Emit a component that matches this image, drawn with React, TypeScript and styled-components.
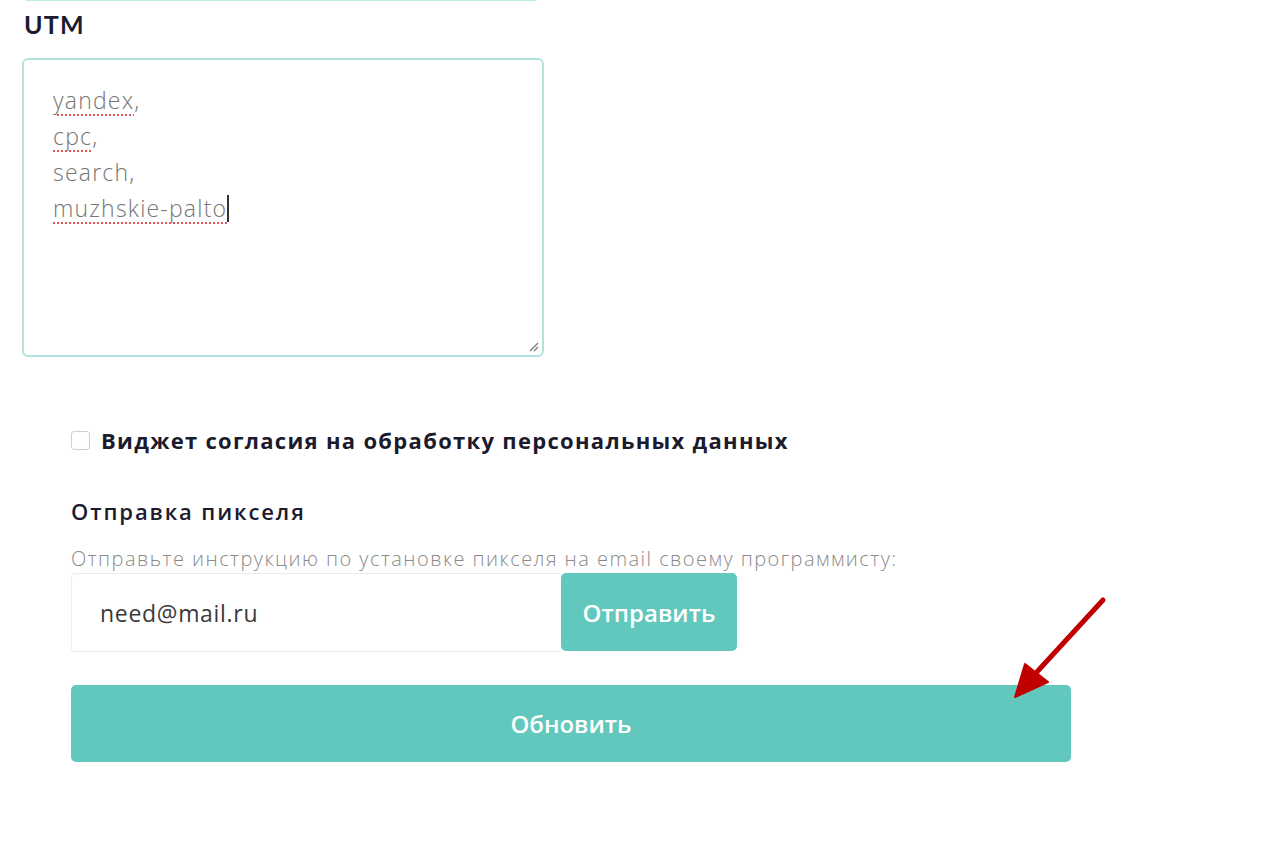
import React from 'react';
import styled, { createGlobalStyle } from 'styled-components';

const GlobalStyle = createGlobalStyle`
  html, body {
    margin: 0;
    padding: 0;
    background: #ffffff;
  }
  body {
    font-family: "Open Sans", "Noto Sans", sans-serif;
    color: #1c1b2e;
  }
`;

const Page = styled.div`
  position: relative;
  width: 1274px;
  height: 848px;
  overflow: hidden;
  background: #fff;
`;

const TopBlock = styled.div`
  padding-left: 22px;
  width: 522px;
`;

const CutInput = styled.div`
  height: 40px;
  margin-top: -39px;
  border: 2px solid #bfe9e5;
  border-radius: 6px;
  box-sizing: border-box;
  width: 518px;
`;

const FieldTitle = styled.div`
  margin: 8px 0 0 2px;
  font-family: "Lato", sans-serif;
  font-weight: 700;
  font-size: 25px;
  letter-spacing: 1.2px;
  line-height: 30px;
  color: #1c1b2e;
`;

const TextArea = styled.div`
  position: relative;
  margin-top: 19px;
  height: 299px;
  box-sizing: border-box;
  border: 2px solid #b3e3df;
  border-radius: 6px;
  padding: 22px 0 0 29px;
  font-family: "Open Sans", sans-serif;
  font-weight: 300;
  font-size: 23px;
  letter-spacing: 1.2px;
  line-height: 36px;
  color: #767676;
`;

const Line = styled.div<{ $typo?: boolean }>`
  height: 36px;
  span {
    text-decoration: ${(p) => (p.$typo ? 'underline dotted #e25555' : 'none')};
    text-decoration-thickness: 2px;
    text-underline-offset: 5px;
  }
`;

const Caret = styled.i`
  display: inline-block;
  width: 1.5px;
  height: 27px;
  background: #333;
  vertical-align: -5px;
`;

const Grip = styled.svg`
  position: absolute;
  right: 3px;
  bottom: 3px;
`;

const Form = styled.div`
  padding: 68px 0 0 71px;
  width: 1000px;
`;

const CheckRow = styled.label`
  display: flex;
  align-items: center;
  gap: 11px;
  font-family: "Open Sans", sans-serif;
  font-weight: 700;
  font-size: 22px;
  letter-spacing: 1.3px;
  line-height: 30px;
  color: #1c1b2e;
`;

const Box = styled.span`
  width: 19px;
  height: 19px;
  box-sizing: border-box;
  border: 1px solid #cfcfcf;
  border-radius: 3px;
  background: #fff;
`;

const SectionTitle = styled.div`
  margin-top: 42px;
  font-family: "Open Sans", sans-serif;
  font-weight: 600;
  font-size: 22px;
  letter-spacing: 1.9px;
  line-height: 28px;
  color: #1c1b2e;
`;

const Hint = styled.div`
  margin-top: 22px;
  font-family: "Open Sans", sans-serif;
  font-weight: 300;
  font-size: 20px;
  letter-spacing: 1.45px;
  line-height: 24px;
  color: #8a8a8a;
  white-space: nowrap;
`;

const SendRow = styled.div`
  display: flex;
  margin-top: 2px;
  height: 79px;
`;

const EmailInput = styled.div`
  width: 490px;
  box-sizing: border-box;
  border: 1px solid #ececec;
  border-right: none;
  border-radius: 4px 0 0 4px;
  display: flex;
  align-items: center;
  padding-left: 28px;
  font-family: "Open Sans", sans-serif;
  font-weight: 400;
  font-size: 23px;
  letter-spacing: 0.7px;
  color: #3a3a3a;
`;

const Button = styled.button<{ $wide?: boolean }>`
  border: none;
  background: #62c8bd;
  color: #fff;
  border-radius: 5px;
  font-family: "Open Sans", sans-serif;
  font-weight: 600;
  font-size: 24px;
  letter-spacing: 0;
  width: ${(p) => (p.$wide ? '1000px' : '176px')};
  height: ${(p) => (p.$wide ? '77px' : '78px')};
  margin-top: ${(p) => (p.$wide ? '33px' : '0')};
  display: block;
  padding: 0;
`;

const Arrow = styled.svg`
  position: absolute;
  left: 1005px;
  top: 590px;
`;

export default function App() {
  return (
    <Page>
      <GlobalStyle />
      <TopBlock>
        <CutInput />
        <FieldTitle>UTM</FieldTitle>
        <TextArea>
          <Line $typo><span>yandex</span>,</Line>
          <Line $typo><span>cpc</span>,</Line>
          <Line>search,</Line>
          <Line $typo><span>muzhskie-palto</span><Caret /></Line>
          <Grip width="12" height="12" viewBox="0 0 12 12">
            <path d="M11 3 L3 11 M11 7 L7 11" stroke="#777" strokeWidth="1.2" />
          </Grip>
        </TextArea>
      </TopBlock>
      <Form>
        <CheckRow>
          <Box />
          Виджет согласия на обработку персональных данных
        </CheckRow>
        <SectionTitle>Отправка пикселя</SectionTitle>
        <Hint>Отправьте инструкцию по установке пикселя на email своему программисту:</Hint>
        <SendRow>
          <EmailInput>need@mail.ru</EmailInput>
          <Button>Отправить</Button>
        </SendRow>
        <Button $wide>Обновить</Button>
      </Form>
      <Arrow width="110" height="115" viewBox="0 0 110 115">
        <path d="M98 10 L30 84" stroke="#c00000" strokeWidth="5" strokeLinecap="round" />
        <path d="M10 107 L20 74 L43 92 Z" fill="#c00000" stroke="#c00000" strokeWidth="2" strokeLinejoin="round" />
      </Arrow>
    </Page>
  );
}
